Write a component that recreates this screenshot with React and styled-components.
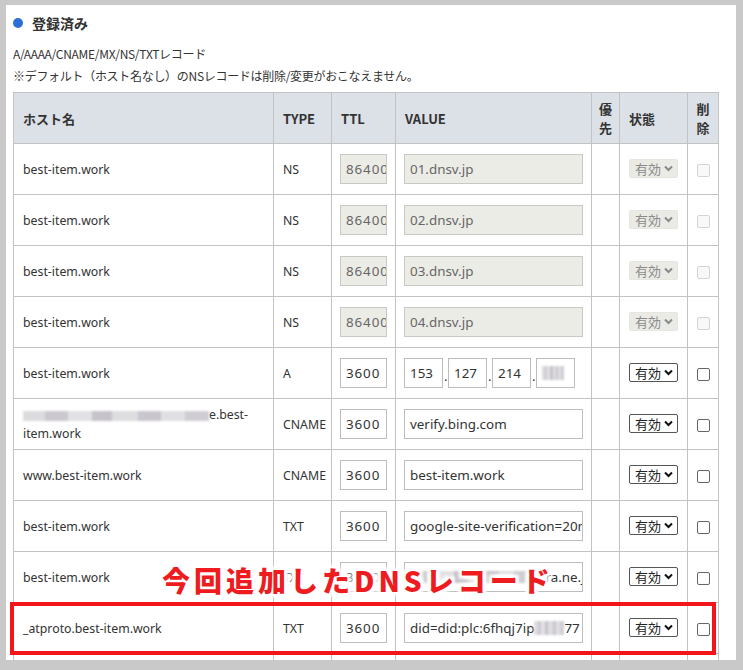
import React from "react";
import styled, { createGlobalStyle } from "styled-components";

const Global = createGlobalStyle`
  html, body { margin: 0; padding: 0; background: #c9c9c9; }
  body { font-family: "Noto Sans", "Noto Sans CJK JP", sans-serif; color: #333; }
  * { box-sizing: border-box; }
`;

const Frame = styled.div`
  width: 743px;
  height: 670px;
  padding: 5px 7px 10px 6px;
  background: #c9c9c9;
  overflow: hidden;
`;

const Panel = styled.div`
  position: relative;
  background: #fff;
  height: 655px;
  overflow: hidden;
  padding: 0 0 0 7px;
`;

const Title = styled.h2`
  margin: 0;
  display: flex;
  align-items: center;
  gap: 9px;
  height: 33px;
  padding-top: 2px;
  font-size: 14px;
  font-weight: 700;
  color: #333;
  font-family: "Noto Sans CJK JP", sans-serif;
`;

const Dot = styled.span`
  width: 10px;
  height: 10px;
  border-radius: 50%;
  background: #2d6fd9;
`;

const Note = styled.p`
  margin: 0;
  font-size: 12px;
  line-height: 22px;
  color: #333;
  font-family: "Noto Sans CJK JP", sans-serif;
  letter-spacing: -0.3px;
`;

const Notes = styled.div`
  padding-top: 5px;
  padding-bottom: 5px;
`;

const Table = styled.table`
  border-collapse: collapse;
  table-layout: fixed;
  width: 705px;
  font-size: 12.3px;
`;

const Th = styled.th`
  background: #dce0e7;
  border: 1px solid #c3c3c3;
  height: 51px;
  text-align: ${(p) => (p.$center ? "center" : "left")};
  padding: 0 ${(p) => (p.$center ? "0" : "9px")};
  font-weight: 700;
  font-size: 13px;
  line-height: 19px;
  color: #333;
  font-family: "Noto Sans CJK JP", sans-serif;
`;

const Td = styled.td`
  border: 1px solid #c3c3c3;
  height: 51px;
  padding: 0 ${(p) => (p.$pad ?? 9)}px;
  vertical-align: middle;
  text-align: ${(p) => (p.$center ? "center" : "left")};
  color: #333;
  line-height: 19px;
  white-space: ${(p) => (p.$nowrap ? "nowrap" : "normal")};
`;

const Input = styled.div`
  display: flex;
  align-items: center;
  width: ${(p) => p.$w}px;
  height: 30px;
  border: 1px solid ${(p) => (p.$disabled ? "#c9c9c4" : "#bdbdbd")};
  background: ${(p) => (p.$disabled ? "#ecece6" : "#fff")};
  color: ${(p) => (p.$disabled ? "#666" : "#333")};
  font-size: 13.4px;
  letter-spacing: ${(p) => (p.$digits ? "0.9px" : "0")};
  padding: 0 ${(p) => (p.$digits ? "0 0 5px" : "5px")};
  white-space: nowrap;
  overflow: hidden;
  font-family: "Noto Sans", sans-serif;
`;

const IpRow = styled.div`
  display: flex;
  align-items: center;
  gap: 1px;
`;

const IpDot = styled.span`
  width: 3px;
  text-align: center;
  font-size: 13px;
  padding-top: 6px;
`;

const Mosaic = styled.span`
  display: inline-block;
  flex-shrink: 0;
  width: ${(p) => p.$w}px;
  height: ${(p) => p.$h || 12}px;
  background: linear-gradient(
    90deg,
    #dcdcdf 0 12%, #cbc9cf 12% 24%, #e2e1e4 24% 37%, #c6c3ca 37% 48%,
    #dddde0 48% 62%, #c9c6cd 62% 74%, #e0dfe2 74% 87%, #cfcdd3 87% 100%
  );
  filter: blur(1px);
  vertical-align: middle;
`;

const Select = styled.div`
  display: inline-flex;
  align-items: center;
  gap: 3px;
  height: 19px;
  padding: 0 4px 0 5px;
  border: 1px solid ${(p) => (p.$disabled ? "#e6e6e1" : "#555")};
  border-radius: 2px;
  background: ${(p) => (p.$disabled ? "#ebebe6" : "#fff")};
  color: ${(p) => (p.$disabled ? "#8a8a8a" : "#222")};
  font-size: 13px;
  font-family: "Noto Sans CJK JP", sans-serif;
  line-height: 1;
`;

const Check = styled.span`
  display: inline-block;
  width: 13px;
  height: 13px;
  border: 1px solid ${(p) => (p.$disabled ? "#d4d4d4" : "#666")};
  border-radius: 2px;
  background: ${(p) => (p.$disabled ? "#f8f8f8" : "#fff")};
  vertical-align: middle;
`;

const Highlight = styled.div`
  position: absolute;
  left: 4px;
  top: 597px;
  width: 706px;
  height: 53px;
  border: 4px solid #f2161b;
  pointer-events: none;
`;

const Annotation = styled.div`
  position: absolute;
  left: 152px;
  top: 555px;
  font-size: 28px;
  font-weight: 900;
  letter-spacing: 4px;
  color: #ee1c1f;
  font-family: "Noto Sans CJK JP", sans-serif;
  line-height: 40px;
  padding: 0 4px;
  text-shadow:
    2px 0 2px #fff, -2px 0 2px #fff, 0 2px 2px #fff, 0 -2px 2px #fff,
    3px 3px 3px #fff, -3px -3px 3px #fff, 3px -3px 3px #fff, -3px 3px 3px #fff,
    0 0 6px #fff, 0 0 6px #fff;
`;

const Chevron = ({ color }) => (
  <svg width="9" height="7" viewBox="0 0 9 7">
    <path d="M1 1.5 L4.5 5 L8 1.5" fill="none" stroke={color} strokeWidth="2" />
  </svg>
);

const Sel = ({ disabled }) => (
  <Select $disabled={disabled}>
    有効
    <Chevron color={disabled ? "#8a8a8a" : "#111"} />
  </Select>
);

const rows = [
  { host: "best-item.work", type: "NS", ttl: "86400", value: "01.dnsv.jp", dis: true },
  { host: "best-item.work", type: "NS", ttl: "86400", value: "02.dnsv.jp", dis: true },
  { host: "best-item.work", type: "NS", ttl: "86400", value: "03.dnsv.jp", dis: true },
  { host: "best-item.work", type: "NS", ttl: "86400", value: "04.dnsv.jp", dis: true },
  { host: "best-item.work", type: "A", ttl: "3600", ip: ["153", "127", "214"] },
  {
    host: (
      <>
        <Mosaic $w={186} $h={10} />e.best-item.work
      </>
    ),
    type: "CNAME",
    ttl: "3600",
    value: "verify.bing.com",
  },
  { host: "www.best-item.work", type: "CNAME", ttl: "3600", value: "best-item.work" },
  { host: "best-item.work", type: "TXT", ttl: "3600", value: "google-site-verification=20mXyz" },
  {
    host: "best-item.work",
    type: "TXT",
    ttl: "3600",
    value: (
      <>
        <Mosaic $w={120} $h={12} />
        <span>kura.ne.jp</span>
      </>
    ),
  },
  {
    host: "_atproto.best-item.work",
    type: "TXT",
    ttl: "3600",
    value: (
      <>
        did=did:plc:6fhqj7ip
        <Mosaic $w={30} $h={14} />
        77
      </>
    ),
  },
  { host: "best-item.work", type: "TXT", ttl: "3600", value: "v=spf1" },
];

const ValueCell = ({ r }) => {
  if (r.ip) {
    return (
      <IpRow>
        {r.ip.map((o) => (
          <React.Fragment key={o}>
            <Input $w={39}>{o}</Input>
            <IpDot>.</IpDot>
          </React.Fragment>
        ))}
        <Input $w={39}>
          <Mosaic $w={22} $h={14} />
        </Input>
      </IpRow>
    );
  }
  return (
    <Input $w={179} $disabled={r.dis}>
      {r.value}
    </Input>
  );
};

export default function App() {
  return (
    <>
      <Global />
      <Frame>
        <Panel>
          <Title>
            <Dot />
            登録済み
          </Title>
          <Notes>
            <Note>A/AAAA/CNAME/MX/NS/TXTレコード</Note>
            <Note>※デフォルト（ホスト名なし）のNSレコードは削除/変更がおこなえません。</Note>
          </Notes>
          <Table>
            <colgroup>
              <col style={{ width: 260 }} />
              <col style={{ width: 58 }} />
              <col style={{ width: 64 }} />
              <col style={{ width: 196 }} />
              <col style={{ width: 28 }} />
              <col style={{ width: 68 }} />
              <col style={{ width: 31 }} />
            </colgroup>
            <thead>
              <tr>
                <Th>ホスト名</Th>
                <Th>TYPE</Th>
                <Th>TTL</Th>
                <Th>VALUE</Th>
                <Th $center>優<br />先</Th>
                <Th>状態</Th>
                <Th $center>削<br />除</Th>
              </tr>
            </thead>
            <tbody>
              {rows.map((r, i) => (
                <tr key={i}>
                  <Td>{r.host}</Td>
                  <Td $nowrap>{r.type}</Td>
                  <Td $pad={8}>
                    <Input $w={47} $digits $disabled={r.dis}>{r.ttl}</Input>
                  </Td>
                  <Td $pad={8}>
                    <ValueCell r={r} />
                  </Td>
                  <Td />
                  <Td>
                    <Sel disabled={r.dis} />
                  </Td>
                  <Td $center $pad={0}>
                    <Check $disabled={r.dis} />
                  </Td>
                </tr>
              ))}
            </tbody>
          </Table>
          <Annotation>今回追加したDNSレコード</Annotation>
          <Highlight />
        </Panel>
      </Frame>
    </>
  );
}
